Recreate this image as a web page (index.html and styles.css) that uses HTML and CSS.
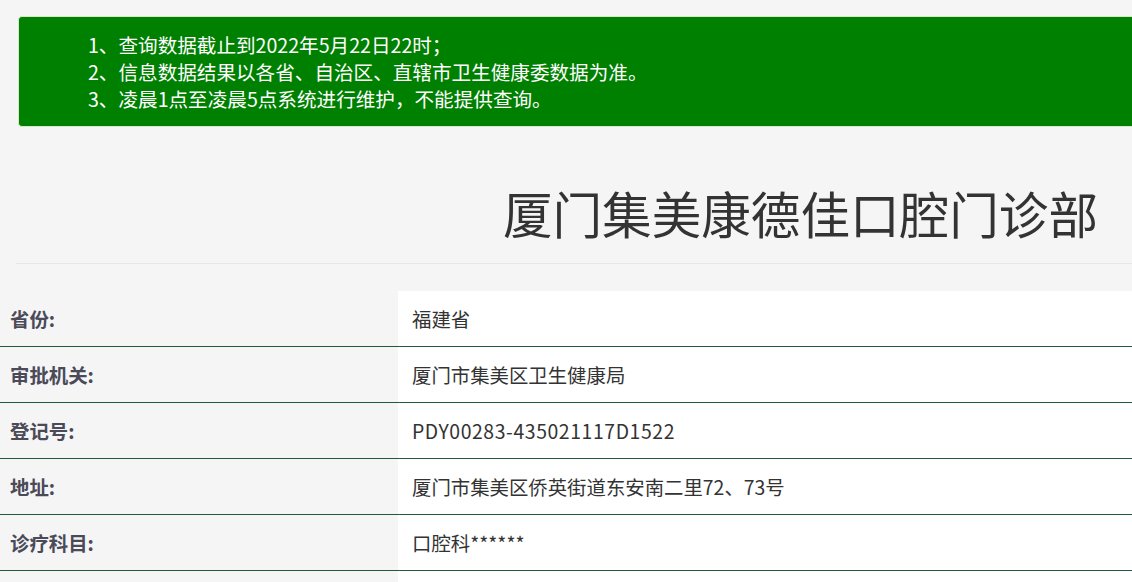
FILE: index.html
```html
<!DOCTYPE html>
<html lang="zh-CN">
<head>
<meta charset="utf-8">
<title>厦门集美康德佳口腔门诊部</title>
<link rel="stylesheet" href="styles.css">
</head>
<body>
  <div class="notice">
    <p>1、查询数据截止到2022年5月22日22时；</p>
    <p>2、信息数据结果以各省、自治区、直辖市卫生健康委数据为准。</p>
    <p>3、凌晨1点至凌晨5点系统进行维护，不能提供查询。</p>
  </div>
  <div class="header">
    <h1 class="title">厦门集美康德佳口腔门诊部</h1>
  </div>
  <div class="table">
    <div class="row"><div class="label">省份:</div><div class="value">福建省</div></div>
    <div class="row"><div class="label">审批机关:</div><div class="value">厦门市集美区卫生健康局</div></div>
    <div class="row"><div class="label">登记号:</div><div class="value code">PDY00283-435021117D1522</div></div>
    <div class="row"><div class="label">地址:</div><div class="value">厦门市集美区侨英街道东安南二里72、73号</div></div>
    <div class="row"><div class="label">诊疗科目:</div><div class="value">口腔科******</div></div>
    <div class="row"><div class="label"></div><div class="value"></div></div>
  </div>
</body>
</html>
```

FILE: styles.css
```css
html, body {
  margin: 0;
  padding: 0;
}
body {
  background: #f5f5f5;
  font-family: "Noto Sans CJK SC", "Microsoft YaHei", sans-serif;
  color: #333;
  overflow: hidden;
}
.notice {
  margin: 16px 0 0 18px;
  background: #008000;
  border: 1px solid #d6e9c6;
  border-right: none;
  border-radius: 4px 0 0 4px;
  padding: 14px 0 14px 69px;
  color: #fff;
  font-size: 19.6px;
  line-height: 27px;
}
.notice p {
  margin: 0;
  white-space: nowrap;
}
.header {
  margin-left: 16px;
  padding: 57px 34px 23px 0;
  border-bottom: 1px solid #e6e6e6;
  display: flex;
  justify-content: flex-end;
}
.title {
  margin: 0;
  font-size: 49.6px;
  line-height: 56px;
  font-weight: normal;
  color: #333;
  white-space: nowrap;
}
.table {
  margin-top: 27px;
}
.row {
  display: grid;
  grid-template-columns: 398px 1fr;
  height: 56px;
  box-sizing: border-box;
  border-bottom: 1px solid #1e5c3e;
}
.label {
  display: flex;
  align-items: center;
  padding-left: 10px;
  font-size: 19.4px;
  font-weight: bold;
  color: #4a4a58;
  background: #f5f5f5;
}
.value {
  display: flex;
  align-items: center;
  padding-left: 14px;
  font-size: 19.4px;
  color: #333;
  background: #fff;
}
.code {
  letter-spacing: 0.6px;
}
```
